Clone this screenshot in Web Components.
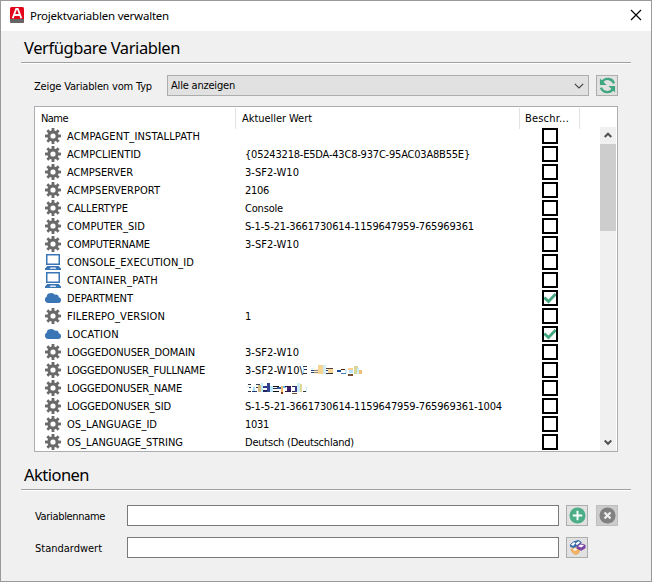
<!DOCTYPE html>
<html lang="de">
<head>
<meta charset="utf-8">
<title>Projektvariablen verwalten</title>
<style>
html, body { margin: 0; width: 652px; height: 582px; overflow: hidden; background: #f0f0f0; }
body { font: 11px/14px "DejaVu Sans Condensed", "DejaVu Sans", sans-serif; color: #000; }
</style>
</head>
<body>
<app-window></app-window>
<script>
const define = (name, html, init) => customElements.define(name, class extends HTMLElement {
  connectedCallback() {
    if (this.shadowRoot) return;
    const root = this.attachShadow({ mode: 'open' });
    root.innerHTML = typeof html === 'function' ? html(this) : html;
    if (init) init(this, root);
  }
});

const gearTeeth = [0, 45, 90, 135].map(a => `<path d="M6.600 0h2.800v16H6.600z" transform="rotate(${a} 8 8)"/>`).join('');
const icons = {
  gear: `<svg viewBox="0 0 16 16"><defs><mask id="m"><path fill="#fff" d="M0 0h16v16H0z"/><circle cx="8" cy="8" r="2.600" fill="#000"/></mask></defs><g fill="#6a6a6a" mask="url(#m)"><circle cx="8" cy="8" r="5.700"/>${gearTeeth}</g></svg>`,
  laptop: `<svg viewBox="0 0 16 16"><path fill="#3a75b5" d="M1 0h14v11H1zM2.300 12h11.400l2.300 2.500V16H0v-1.500z"/><path fill="#fff" d="M2.500 1.500h11v8h-11zM5.500 13.500h5l.8 1.300H4.700z"/></svg>`,
  cloud: `<svg viewBox="0 0 16 16"><path fill="#3a75b5" d="M3.500 13A3.300 3.300 0 0 1 1.700 6.800 3.700 3.700 0 0 1 5 3.200 4.800 4.800 0 0 1 10 4.700 2.800 2.800 0 0 1 13.800 7.300 2.900 2.900 0 0 1 13.500 13z"/></svg>`,
  app: `<svg viewBox="0 0 14 16"><rect width="14" height="16" rx="1.500" fill="#e3061a"/><path fill="#666" d="M0 12h14v2.500a1.500 1.500 0 0 1-1.500 1.500h-11A1.500 1.500 0 0 1 0 14.500z"/><path fill="none" stroke="#fff" stroke-width="1.800" d="M2.700 11.200 6.200 2h1.600l3.500 9.200M4.200 8h5.600"/></svg>`,
  close: `<svg viewBox="0 0 12 12"><path d="M1 1l10 10M11 1L1 11" stroke="#000" stroke-width="1.150"/></svg>`,
  refresh: `<svg viewBox="0 0 18 18"><g fill="none" stroke="#3fa780" stroke-width="2.500"><path d="M3.300 5.200A7.100 7.100 0 0 1 15.900 6.800M14.700 12.800A7.100 7.100 0 0 1 2.100 11.200"/></g><path fill="#3fa780" d="M1 1.500v7h7zM17 16.500v-7h-7z"/></svg>`,
  plus: `<svg viewBox="0 0 18 18"><circle cx="9" cy="9" r="8.500" fill="#4bae87"/><path d="M9 4v10M4 9h10" stroke="#fff" stroke-width="2"/></svg>`,
  cancel: `<svg viewBox="0 0 18 18"><circle cx="9" cy="9" r="8.500" fill="#808080"/><path d="M5.800 5.800l6.400 6.400M12.200 5.800l-6.400 6.400" stroke="#ededed" stroke-width="2.500"/></svg>`,
  tags: `<svg viewBox="0 0 18 18"><g stroke-width="1"><path fill="#f5b366" stroke="#e9a14f" d="M2 11l4.500-2 4.500 2.500-.5 3-3.500 2-3-2z"/><path fill="#fff" stroke="none" d="M4 10.800l2.500-1.300 2.700 1.500-3 1.500z"/><path fill="#376aa9" stroke="#376aa9" d="M1.500 6L5 3l5-1.500 3 2-3 3L5 9 1.500 8z"/><path fill="#fff" stroke="none" d="M2 5.900L5.500 3.300l1.300 1.200-2.500 2.900zM7 4.600l3.300-2.300 1.500 1.300-3.500 3z"/><path fill="#7b43a1" stroke="#7b43a1" d="M8.500 7.500L12 5l5 1.500v3L13 12l-4.500-2z"/><path fill="#fff" stroke="none" d="M9.500 7.600l2.800-1.900 3.700 1-2.900 2.300z"/></g></svg>`,
  check: `<svg viewBox="0 0 12 12"><path d="M.3 5.500l4.200 4L11.700 2" fill="none" stroke="#45a77f" stroke-width="2.900"/></svg>`,
  chevron: `<svg viewBox="0 0 10 6"><path d="M.8.8L5 5 9.200.8" fill="none" stroke="#444" stroke-width="1.200"/></svg>`,
  up: `<svg viewBox="0 0 8 7"><path d="M.7 5L4 1.700 7.300 5" fill="none" stroke="#505050" stroke-width="2"/></svg>`,
  down: `<svg viewBox="0 0 8 7"><path d="M.7 1.500L4 4.800 7.300 1.500" fill="none" stroke="#505050" stroke-width="2"/></svg>`,
};

/* Pixelated remains of redacted names: x, y, width, height, colour */
const smudges = {
  full: [[0,1,4,1,'#333'],[0,4,4,1,'#225'],[0,8,4,1,'#333'],[0,2,1,6,'#a9ddff'],[8,3,3,1,'#d8efff'],[8,5,7,1,'#123575'],[8,7,7,1,'#26476f'],[11,4,4,5,'#ffd69a88'],[15,0,5,9,'#f6d494'],[20,0,3,9,'#d3ecf3'],[23,3,7,1,'#554037'],[23,5,7,1,'#153e81'],[23,8,7,1,'#333'],[25,4,5,4,'#f8d696'],[34,5,4,2,'#1b4b98'],[38,4,5,1,'#442412'],[38,8,5,1,'#3f7fc2'],[42,4,2,4,'#d3edff'],[45,3,5,2,'#ffd18e'],[45,9,5,2,'#745038'],[46,5,4,3,'#b9e3ff'],[51,1,4,8,'#d8d698'],[54,3,2,6,'#c6f1fb'],[56,5,3,4,'#f3bd74']],
  name: [[1,1,3,1,'#333'],[0,3,2,1,'#bfeaff'],[2,4,2,1,'#244778'],[1,8,3,1,'#333'],[6,4,2,4,'#a9dffa'],[5,8,5,1,'#203a74'],[9,1,4,1,'#345'],[9,4,4,1,'#333'],[11,2,3,7,'#d8b982'],[14,0,2,9,'#bcebfa'],[16,3,6,2,'#243c86'],[16,7,6,2,'#222564'],[20,0,3,9,'#33418e'],[23,3,3,6,'#b9e9ff'],[26,3,6,1,'#111'],[26,5,6,1,'#225'],[26,8,6,1,'#111'],[30,4,4,2,'#2d569b'],[34,3,2,7,'#efb66c'],[34,9,2,2,'#7c3b15'],[36,3,3,2,'#68b7ee'],[38,3,6,1,'#251740'],[38,8,6,1,'#251740'],[40,4,4,4,'#40206d'],[45,3,5,1,'#211d57'],[45,8,5,1,'#211d57'],[45,10,5,1,'#7b4824'],[48,3,2,6,'#363a89'],[50,0,3,9,'#ccecf6'],[53,1,2,8,'#dfd998'],[56,8,4,1,'#333'],[59,4,1,5,'#c4effb']]
};

define('ui-icon', el => `<style>:host{display:block;flex:none;width:16px;height:16px}svg{display:block;width:100%;height:100%}</style>${icons[el.getAttribute('name')]}`);

/* A single line of text, tracked to the width in its "w" attribute */
define('ui-text', `<style>:host{display:inline-block;white-space:pre;flex:none}span{display:inline-block}</style><span><slot></slot></span>`, (el, root) => {
  const w = +el.getAttribute('w');
  if (!w) return;
  const s = root.querySelector('span');
  s.style.letterSpacing = (w - s.getBoundingClientRect().width) / el.textContent.length + 'px';
});

define('ui-smudge', el => `<style>:host{display:block;flex:none}:host([kind=name]){margin-left:2px}svg{display:block}</style><svg width="60" height="12" shape-rendering="crispEdges">${smudges[el.getAttribute('kind')].map(([x,y,w,h,c]) => `<rect x="${x}" y="${y}" width="${w}" height="${h}" fill="${c}"/>`).join('')}</svg>`);

define('title-bar', `<style>
:host{display:flex;align-items:center;height:30px;padding:0 9px;background:#fff;font:11.5px/16px "Noto Sans",sans-serif}
ui-icon[name=app]{width:14px;height:16px;margin-right:6px;margin-top:-2px}
ui-icon[name=close]{width:12px;height:12px;margin-left:auto;margin-right:0;margin-top:-2px}
</style><ui-icon name="app"></ui-icon><slot></slot><ui-icon name="close"></ui-icon>`);

define('section-head', `<style>
:host{display:block;height:31px;margin:0 20px;border-bottom:1px solid #a0a0a0;box-shadow:0 1px #fff;box-sizing:content-box;padding-left:3px;font:16.5px/34px "Noto Sans",sans-serif}
</style><slot></slot>`);

define('ui-button', el => `<style>
:host{display:grid;place-items:center;box-sizing:border-box;width:22px;height:21px;border:1px solid #adadad;background:#e1e1e1;flex:none}
:host([disabled]){background:#ccc;border-color:#bfbfbf}
ui-icon{width:17px;height:17px}
</style><ui-icon name="${el.getAttribute('icon')}"></ui-icon>`);

define('ui-select', `<style>
:host{display:flex;box-sizing:border-box;align-items:center;justify-content:space-between;width:422px;height:21px;border:1px solid #adadad;background:#e1e1e1;padding:1px 4px 0 3px}
ui-icon{width:10px;height:6px}
</style><slot></slot><ui-icon name="chevron"></ui-icon>`);

define('ui-field', `<style>:host{display:block;box-sizing:border-box;width:432px;height:21px;border:1px solid #7a7a7a;background:#fff}</style>`);

define('ui-check', el => `<style>
:host{display:grid;place-items:center;box-sizing:border-box;width:16px;height:16px;border:2px solid #000;background:#fff}
ui-icon{width:12px;height:12px}
</style>${el.hasAttribute('checked') ? '<ui-icon name="check"></ui-icon>' : ''}`);

define('var-row', `<style>
:host{display:grid;grid-template-columns:200px 297px 1fr;height:18px;align-items:center;padding-left:10px}
.n,.v{display:flex;align-items:center}
.n{gap:6px}
.v,::slotted([slot=name]){padding-top:2px}
</style><div class="n"><slot name="icon"></slot><slot name="name"></slot></div><div class="v"><slot name="value"></slot></div><slot name="check"></slot>`);

define('scroll-bar', `<style>
:host{display:flex;flex-direction:column;justify-content:space-between;align-items:center;width:16px;background:#f0f0f0}
div{width:16px;height:17px;display:grid;place-items:center}
ui-icon{width:8px;height:7px}
b{display:block;width:16px;height:87px;background:#cdcdcd;margin-bottom:auto}
</style><div><ui-icon name="up"></ui-icon></div><b></b><div><ui-icon name="down"></ui-icon></div>`);

const rows = [
  ['gear','ACMPAGENT_INSTALLPATH',133],
  ['gear','ACMPCLIENTID',74,'{05243218-E5DA-43C8-937C-95AC03A8B55E}',225],
  ['gear','ACMPSERVER',66,'3-SF2-W10',54],
  ['gear','ACMPSERVERPORT',93,'2106',24],
  ['gear','CALLERTYPE',61,'Console',38],
  ['gear','COMPUTER_SID',78,'S-1-5-21-3661730614-1159647959-765969361',229],
  ['gear','COMPUTERNAME',83,'3-SF2-W10',54],
  ['laptop','CONSOLE_EXECUTION_ID',127],
  ['laptop','CONTAINER_PATH',91],
  ['cloud','DEPARTMENT',66,'',0,1],
  ['gear','FILEREPO_VERSION',98,'1',6],
  ['cloud','LOCATION',52,'',0,1],
  ['gear','LOGGEDONUSER_DOMAIN',128,'3-SF2-W10',54],
  ['gear','LOGGEDONUSER_FULLNAME',138,'3-SF2-W10\\',58,0,'full'],
  ['gear','LOGGEDONUSER_NAME',115,'',0,0,'name'],
  ['gear','LOGGEDONUSER_SID',104,'S-1-5-21-3661730614-1159647959-765969361-1004',257],
  ['gear','OS_LANGUAGE_ID',90,'1031',24],
  ['gear','OS_LANGUAGE_STRING',116,'Deutsch (Deutschland)',109],
];

define('var-table', () => `<style>
:host{display:block;box-sizing:border-box;width:584px;height:346px;border:1px solid #abadb3;background:#fff}
header{display:grid;grid-template-columns:201px 284px 60px;height:20px}
header div{border-right:1px solid #e3e3e3;box-sizing:border-box;padding-left:6px;margin-top:1px;line-height:21px}
header div:last-child{padding-left:5px}
main{display:grid;grid-template-columns:565px 16px;height:324px}
[slot=value]{display:flex;align-items:center}
</style>
<header><div><ui-text w="27">Name</ui-text></div><div><ui-text w="70">Aktueller Wert</ui-text></div><div><ui-text w="44">Beschr...</ui-text></div></header>
<main><section>${rows.map(([i,n,nw,v,vw,c,s]) => `<var-row><ui-icon slot="icon" name="${i}"></ui-icon><ui-text slot="name" w="${nw}">${n}</ui-text><span slot="value">${v ? `<ui-text w="${vw}">${v}</ui-text>` : ''}${s ? `<ui-smudge kind="${s}"></ui-smudge>` : ''}</span><ui-check slot="check" ${c ? 'checked' : ''}></ui-check></var-row>`).join('')}</section><scroll-bar></scroll-bar></main>`);

define('form-row', `<style>
:host{display:flex;height:21px;align-items:center;padding-left:33px}
.l{width:var(--label,92px);box-sizing:border-box;flex:none;padding-top:3px}
.b{display:flex;gap:8px;margin-left:7px}
</style><div class="l"><slot name="label"></slot></div><slot></slot><div class="b"><slot name="buttons"></slot></div>`);

define('app-window', `<style>
:host{display:block;box-sizing:border-box;width:652px;height:582px;border:1px solid #999;background:#f0f0f0}
.filter{--label:133px;margin-top:12px}
var-table{margin:10px 0 0 33px}
.actions{margin-top:6px}
.a{margin-top:15px;padding-left:34px}
.b{margin-top:11px;padding-left:34px}
</style>
<title-bar><ui-text w="139">Projektvariablen verwalten</ui-text></title-bar>
<section-head><ui-text w="156">Verfügbare Variablen</ui-text></section-head>
<form-row class="filter"><ui-text slot="label" w="118">Zeige Variablen vom Typ</ui-text><ui-select><ui-text w="64">Alle anzeigen</ui-text></ui-select><ui-button slot="buttons" icon="refresh"></ui-button></form-row>
<var-table></var-table>
<section-head class="actions"><ui-text w="65">Aktionen</ui-text></section-head>
<form-row class="a"><ui-text slot="label" w="70">Variablenname</ui-text><ui-field></ui-field><ui-button slot="buttons" icon="plus"></ui-button><ui-button slot="buttons" icon="cancel" disabled></ui-button></form-row>
<form-row class="b"><ui-text slot="label" w="67">Standardwert</ui-text><ui-field></ui-field><ui-button slot="buttons" icon="tags"></ui-button></form-row>`);
</script>
</body>
</html>
